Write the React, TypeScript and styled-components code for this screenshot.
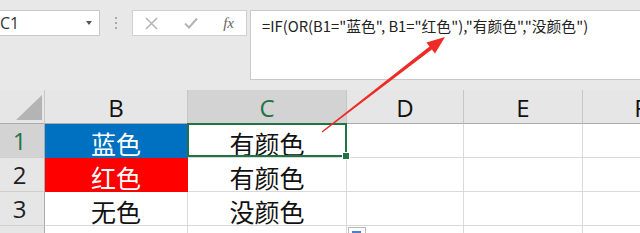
import React from "react";
import styled, { createGlobalStyle } from "styled-components";

const GlobalStyle = createGlobalStyle`
  html, body { margin: 0; padding: 0; background: #e8e8e8; }
  * { box-sizing: border-box; }
`;

const CJK = `"Noto Sans CJK SC", "Noto Sans", sans-serif`;
const LATIN = `"Open Sans", "Noto Sans", "Noto Sans CJK SC", sans-serif`;
const GREEN = "#217346";

const Page = styled.div`
  position: relative;
  width: 640px;
  height: 233px;
  overflow: hidden;
  background: #e8e8e8;
`;

const Toolbar = styled.div`
  display: flex;
  align-items: flex-start;
  height: 90px;
  padding-top: 10px;
`;

const NameBox = styled.div`
  display: flex;
  align-items: center;
  justify-content: space-between;
  width: 101px;
  height: 26px;
  margin-left: -1px;
  padding: 0 7px 0 0;
  background: #fff;
  border: 1px solid #c9c9c9;
  font-family: ${LATIN};
  font-size: 16px;
  color: #333;
`;

const Caret = styled.span`
  width: 0;
  height: 0;
  border-left: 3px solid transparent;
  border-right: 3px solid transparent;
  border-top: 4px solid #555;
`;

const Grip = styled.div`
  width: 32px;
  height: 26px;
  display: flex;
  flex-direction: column;
  align-items: center;
  justify-content: center;
  gap: 3px;
  span {
    width: 2px;
    height: 2px;
    background: #a8a8a8;
  }
`;

const FxButtons = styled.div`
  display: flex;
  align-items: center;
  justify-content: space-between;
  width: 115px;
  height: 26px;
  padding: 0 12px 0 12px;
  background: #fff;
  border: 1px solid #d0d0d0;
`;

const Fx = styled.span`
  font-family: "Liberation Serif", serif;
  font-style: italic;
  font-size: 15px;
  color: #666;
`;

const FormulaBox = styled.div`
  flex: 1;
  height: 70px;
  margin-left: 3px;
  padding: 4px 0 0 11px;
  background: #fff;
  border: 1px solid #c9c9c9;
  border-right: none;
  font-family: ${CJK};
  font-size: 14.8px;
  color: #222;
  white-space: nowrap;
`;

const Sheet = styled.div`
  display: grid;
  grid-template-columns: 45px 143px 159px 117px 119px 116px;
  grid-auto-rows: 34px;
  width: 699px;
  background: #fff;
`;

const Corner = styled.div`
  background: #e6e6e6;
  border-right: 1px solid #c9c9c9;
  border-bottom: 1px solid #ababab;
  display: flex;
  align-items: flex-end;
  justify-content: flex-end;
  padding: 0 2px 3px 0;
`;

const ColHeader = styled.div<{ $active?: boolean }>`
  display: flex;
  align-items: center;
  justify-content: center;
  background: ${(p) => (p.$active ? "#d3d3d3" : "#e6e6e6")};
  border-right: 1px solid #c6c6c6;
  border-bottom: 1px solid ${(p) => (p.$active ? GREEN : "#ababab")};
  font-family: ${LATIN};
  font-size: 24px;
  color: ${(p) => (p.$active ? GREEN : "#111")};
  padding-top: 2px;
`;

const RowHeader = styled.div<{ $active?: boolean }>`
  display: flex;
  align-items: center;
  justify-content: center;
  background: ${(p) => (p.$active ? "#d3d3d3" : "#e6e6e6")};
  border-right: 1px solid #ababab;
  border-bottom: 1px solid #d0d0d0;
  font-family: ${LATIN};
  font-size: 24px;
  color: ${(p) => (p.$active ? GREEN : "#222")};
  padding-right: 5px;
`;

const Cell = styled.div<{ $fill?: string; $light?: boolean; $selected?: boolean }>`
  position: relative;
  display: flex;
  align-items: center;
  justify-content: center;
  background: ${(p) => p.$fill || "#fff"};
  border-right: 1px solid ${(p) => (p.$fill ? p.$fill : "#d9d9d9")};
  border-bottom: 1px solid ${(p) => (p.$fill ? p.$fill : "#d9d9d9")};
  font-family: ${CJK};
  font-size: 25px;
  color: ${(p) => (p.$light ? "#fff" : "#111")};
  padding-top: 4px;
  ${(p) =>
    p.$selected &&
    `
    &::after {
      content: "";
      position: absolute;
      inset: -1px -1px 0 -1px;
      border: 2px solid ${GREEN};
    }
    &::before {
      content: "";
      position: absolute;
      right: -4px;
      bottom: -3px;
      width: 6px;
      height: 6px;
      background: ${GREEN};
      border: 1px solid #fff;
      z-index: 2;
    }
  `}
`;

const Arrow = styled.svg`
  position: absolute;
  left: 0;
  top: 0;
  pointer-events: none;
`;

const PasteIcon = styled.div`
  position: absolute;
  left: 348px;
  top: 227px;
  width: 18px;
  height: 16px;
  background: #fff;
  border: 1px solid #b8b8b8;
  padding: 3px 0 0 3px;
  span {
    display: block;
    width: 9px;
    height: 8px;
    background: #4a7fd0;
  }
`;

const cols = ["B", "C", "D", "E", "F"];

type Row = { n: number; b: string; c: string; fill?: string };
const rows: Row[] = [
  { n: 1, b: "蓝色", c: "有颜色", fill: "#0070c0" },
  { n: 2, b: "红色", c: "有颜色", fill: "#ff0000" },
  { n: 3, b: "无色", c: "没颜色" },
];

export default function App() {
  return (
    <Page>
      <GlobalStyle />
      <Toolbar>
        <NameBox>
          <span>C1</span>
          <Caret />
        </NameBox>
        <Grip>
          <span />
          <span />
          <span />
        </Grip>
        <FxButtons>
          <svg width="13" height="13" viewBox="0 0 13 13">
            <path d="M1 1 L12 12 M12 1 L1 12" stroke="#b5b5b5" strokeWidth="1.6" />
          </svg>
          <svg width="14" height="12" viewBox="0 0 14 12">
            <path d="M1 6.5 L5 10.5 L13 1.5" stroke="#b5b5b5" strokeWidth="2" fill="none" />
          </svg>
          <Fx>fx</Fx>
        </FxButtons>
        <FormulaBox>=IF(OR(B1="蓝色", B1="红色"),"有颜色","没颜色")</FormulaBox>
      </Toolbar>
      <Sheet>
        <Corner>
          <svg width="26" height="25" viewBox="0 0 26 25">
            <path d="M26 0 L26 25 L0 25 Z" fill="#b4b4b4" />
          </svg>
        </Corner>
        {cols.map((c) => (
          <ColHeader key={c} $active={c === "C"}>
            {c}
          </ColHeader>
        ))}
        {rows.map((r) => (
          <React.Fragment key={r.n}>
            <RowHeader $active={r.n === 1}>{r.n}</RowHeader>
            <Cell $fill={r.fill} $light={!!r.fill}>
              {r.b}
            </Cell>
            <Cell $selected={r.n === 1}>{r.c}</Cell>
            <Cell />
            <Cell />
            <Cell />
          </React.Fragment>
        ))}
        <RowHeader />
        <Cell />
        <Cell />
        <Cell />
        <Cell />
        <Cell />
      </Sheet>
      <PasteIcon>
        <span />
      </PasteIcon>
      <Arrow width="640" height="233" viewBox="0 0 640 233">
        <polygon
          points="322.4,132.5 431.9,49.6 435,53.5 445,37 426.4,42.4 429.5,46.4 321.6,131.5"
          fill="#ee2b24"
        />
      </Arrow>
    </Page>
  );
}
